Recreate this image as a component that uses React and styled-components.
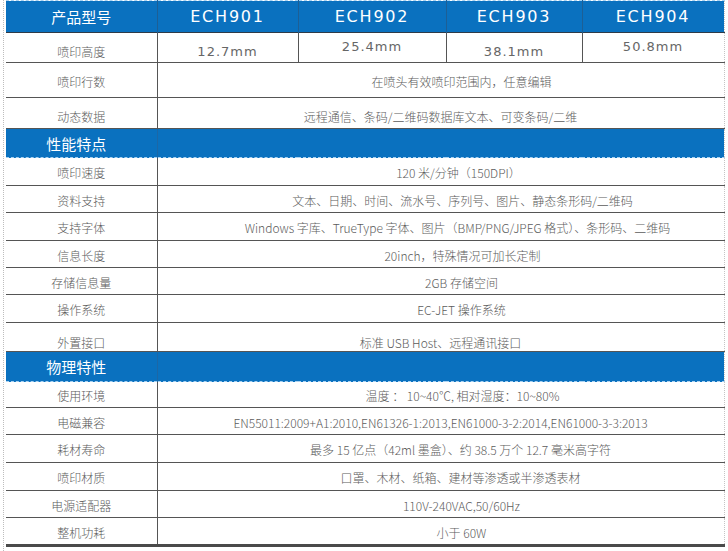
import styled, { createGlobalStyle } from "styled-components";

const GlobalStyle = createGlobalStyle`
  html, body {
    margin: 0;
    padding: 0;
    background: #fff;
  }
  body {
    font-family: "Noto Sans CJK SC", "Noto Sans", sans-serif;
  }
`;

const BLUE = "#0a71bf";

const Page = styled.div`
  position: relative;
  width: 728px;
  height: 551px;
  padding-left: 2px;
  box-sizing: border-box;
  border-left: 1px dotted #bdbdbd;
  margin-left: 3px;
  overflow: hidden;
`;

const Table = styled.table`
  width: 718px;
  border-collapse: collapse;
  table-layout: fixed;
  color: #5c5c5c;
  font-size: 12px;
  font-weight: 300;
  border-right: 1px dotted #c4c4c4;
`;

const HeadRow = styled.tr`
  height: 32px;
  background: ${BLUE};
  border-bottom: 1px solid #2f3b47;
  border-top: 1px dashed #a9d2f2;
`;

const HeadCell = styled.th`
  color: #fff;
  font-weight: normal;
  padding: 0;
  border-left: 1px solid #1d5f95;
  font-size: ${(p) => (p.$model ? "16px" : "15px")};
  font-family: ${(p) =>
    p.$model ? '"DejaVu Sans", Verdana, sans-serif' : '"Noto Sans CJK SC", sans-serif'};
  letter-spacing: ${(p) => (p.$model ? "1.8px" : "0")};
  &:first-child {
    border-left: none;
  }
`;

const Row = styled.tr`
  height: ${(p) => p.$h}px;
  border-bottom: ${(p) => (p.$last ? "3px solid #4a4a4a" : "1px solid #555")};
`;

const Label = styled.td`
  text-align: center;
  padding: ${(p) => p.$drop || 2}px 0 0 0;
  vertical-align: middle;
  border-right: 1px solid #555;
  white-space: nowrap;
`;

const Value = styled.td`
  text-align: center;
  vertical-align: middle;
  padding: ${(p) => p.$drop || 2}px 0 0 ${(p) => p.$shift ?? 36}px;
  white-space: nowrap;
`;

const Size = styled.td`
  text-align: center;
  vertical-align: middle;
  font-family: "DejaVu Sans", Verdana, sans-serif;
  font-weight: normal;
  font-size: 13px;
  letter-spacing: 1px;
  color: #666;
  padding: ${(p) => (p.$low ? "8px 0 0" : "0 0 2px")};
  border-left: 1px solid #555;
  &:nth-child(2) {
    border-left: none;
  }
`;

const SectionRow = styled.tr`
  height: ${(p) => p.$h}px;
  background: ${BLUE};
  border-top: 1px dashed #a9d2f2;
  border-bottom: 1px dashed #a9d2f2;
`;

const SectionTitle = styled.td`
  color: #fff;
  font-size: 15px;
  font-weight: normal;
  text-align: center;
  padding: 0 10px 0 0;
  border-right: 1px solid #1c67a6;
`;

const SectionFill = styled.td``;

const models = ["ECH901", "ECH902", "ECH903", "ECH904"];
const sizes = [
  { v: "12.7mm", low: true },
  { v: "25.4mm", low: false },
  { v: "38.1mm", low: true },
  { v: "50.8mm", low: false },
];

const perf = [
  { k: "喷印速度", v: "120 米/分钟（150DPI）", h: 28, shift: 36 },
  { k: "资料支持", v: "文本、日期、时间、流水号、序列号、图片、静态条形码/二维码", h: 27, shift: 44 },
  { k: "支持字体", v: "Windows 字库、TrueType 字体、图片（BMP/PNG/JPEG 格式）、条形码、二维码", h: 28, shift: 34 },
  { k: "信息长度", v: "20inch，特殊情况可加长定制", h: 27, shift: 44 },
  { k: "存储信息量", v: "2GB 存储空间", h: 27, shift: 42 },
  { k: "操作系统", v: "EC-JET  操作系统", h: 28, shift: 42 },
  { k: "外置接口", v: "标准 USB Host、远程通讯接口", h: 29, shift: 0, drop: 10 },
];

const phys = [
  { k: "使用环境", v: "温度 ： 10~40℃, 相对湿度：10~80%", h: 26, shift: 44 },
  { k: "电磁兼容", v: "EN55011:2009+A1:2010,EN61326-1:2013,EN61000-3-2:2014,EN61000-3-3:2013", h: 27, shift: 0 },
  { k: "耗材寿命", v: "最多 15 亿点（42ml 墨盒）、约 38.5 万个 12.7 毫米高字符", h: 28, shift: 40 },
  { k: "喷印材质", v: "口罩、木材、纸箱、建材等渗透或半渗透表材", h: 28, shift: 40 },
  { k: "电源适配器", v: "110V-240VAC,50/60Hz", h: 27, shift: 42 },
  { k: "整机功耗", v: "小于 60W", h: 28, shift: 42 },
];

export default function App() {
  return (
    <>
      <GlobalStyle />
      <Page>
        <Table>
          <colgroup>
            <col style={{ width: 151 }} />
            <col style={{ width: 141 }} />
            <col style={{ width: 148 }} />
            <col style={{ width: 136 }} />
            <col style={{ width: 142 }} />
          </colgroup>
          <thead>
            <HeadRow>
              <HeadCell>产品型号</HeadCell>
              {models.map((m) => (
                <HeadCell key={m} $model>
                  {m}
                </HeadCell>
              ))}
            </HeadRow>
          </thead>
          <tbody>
            <Row $h={30}>
              <Label $drop={8}>喷印高度</Label>
              {sizes.map((s) => (
                <Size key={s.v} $low={s.low}>
                  {s.v}
                </Size>
              ))}
            </Row>
            <Row $h={35}>
              <Label>喷印行数</Label>
              <Value colSpan={4} $shift={42}>
                在喷头有效喷印范围内，任意编辑
              </Value>
            </Row>
            <Row $h={31}>
              <Label $drop={6}>动态数据</Label>
              <Value colSpan={4} $shift={0} $drop={6}>
                远程通信、条码/二维码数据库文本、可变条码/二维
              </Value>
            </Row>
            <SectionRow $h={29}>
              <SectionTitle>性能特点</SectionTitle>
              <SectionFill colSpan={4} />
            </SectionRow>
            {perf.map((r) => (
              <Row key={r.k} $h={r.h}>
                <Label $drop={r.drop}>{r.k}</Label>
                <Value colSpan={4} $shift={r.shift} $drop={r.drop}>
                  {r.v}
                </Value>
              </Row>
            ))}
            <SectionRow $h={30}>
              <SectionTitle>物理特性</SectionTitle>
              <SectionFill colSpan={4} />
            </SectionRow>
            {phys.map((r, i) => (
              <Row key={r.k} $h={r.h} $last={i === phys.length - 1}>
                <Label>{r.k}</Label>
                <Value colSpan={4} $shift={r.shift}>
                  {r.v}
                </Value>
              </Row>
            ))}
          </tbody>
        </Table>
      </Page>
    </>
  );
}
